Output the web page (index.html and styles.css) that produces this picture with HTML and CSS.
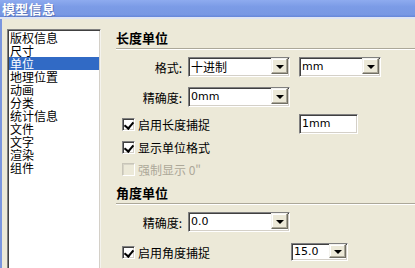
FILE: index.html
```html
<!DOCTYPE html>
<html lang="zh-CN">
<head>
<meta charset="utf-8">
<title>模型信息</title>
<link rel="stylesheet" href="styles.css">
</head>
<body>
<div class="titlebar"><span class="ttl">模型信息</span></div>
<div class="window">
  <div class="sidebar">
    <ul class="listbox">
      <li>版权信息</li>
      <li>尺寸</li>
      <li class="sel">单位</li>
      <li>地理位置</li>
      <li>动画</li>
      <li>分类</li>
      <li>统计信息</li>
      <li>文件</li>
      <li>文字</li>
      <li>渲染</li>
      <li>组件</li>
    </ul>
  </div>
  <div class="panel">
    <div class="sechead">长度单位</div>
    <div class="row r1">
      <span class="lbl">格式:</span>
      <div class="combo w102"><span class="val">十进制</span><span class="btn"><i></i></span></div>
      <div class="combo w82 gap"><span class="val lat">mm</span><span class="btn"><i></i></span></div>
    </div>
    <div class="row r2">
      <span class="lbl">精确度:</span>
      <div class="combo w102"><span class="val lat">0mm</span><span class="btn"><i></i></span></div>
    </div>
    <div class="row chk r3">
      <label class="cb wide"><span class="box on"></span>启用长度捕捉</label>
      <div class="text w59"><span class="val lat">1mm</span></div>
    </div>
    <div class="row chk r4">
      <label class="cb"><span class="box on"></span>显示单位格式</label>
    </div>
    <div class="row chk r5">
      <label class="cb dis"><span class="box"></span>强制显示 0"</label>
    </div>
    <div class="sechead s2">角度单位</div>
    <div class="row r6">
      <span class="lbl">精确度:</span>
      <div class="combo w102"><span class="val lat">0.0</span><span class="btn"><i></i></span></div>
    </div>
    <div class="row chk r7">
      <label class="cb wide2"><span class="box on"></span>启用角度捕捉</label>
      <div class="combo w57 h18"><span class="val lat">15.0</span><span class="btn"><i></i></span></div>
    </div>
  </div>
</div>
</body>
</html>
```

FILE: styles.css
```css
* { box-sizing: border-box; }
html, body {
  margin: 0;
  padding: 0;
  width: 415px;
  height: 268px;
  overflow: hidden;
  background: #ece9d8;
  font-family: "Noto Sans CJK SC", "Liberation Sans", sans-serif;
  font-size: 12px;
  color: #000;
}
.titlebar {
  height: 17px;
  padding-left: 2px;
  display: flex;
  align-items: center;
  color: #fff;
  font-weight: bold;
  font-size: 13px;
  text-shadow: 1px 1px 0 #5b74b8;
  background: linear-gradient(#8eabef, #7b9be6 40%, #7898e4 85%, #6586d9);
  border-bottom: 2px solid #dfe5f3;
  box-sizing: content-box;
}
.ttl {
  line-height: 15px;
  letter-spacing: 0.3px;
}
.window {
  display: flex;
  height: 249px;
  overflow: hidden;
  border-left: 2px solid #7a96df;
}
.sidebar {
  padding: 10px 0 0 5px;
  width: 99px;
  flex: none;
  display: flex;
  flex-direction: column;
}
.listbox {
  list-style: none;
  margin: 0;
  width: 94px;
  flex: 1;
  background: #fff;
  border-top: 1px solid #808080;
  border-left: 1px solid #808080;
  border-right: 1px solid #f4f3ee;
  box-shadow: inset 1px 1px 0 #404040, inset -1px 0 0 #d4d0c8;
  padding: 1px 0 0 1px;
}
.listbox li {
  height: 13px;
  line-height: 13px;
  padding-left: 1px;
  white-space: nowrap;
  margin-right: 1px;
}
.listbox li.sel {
  background: #316ac5;
  color: #fff;
}
.panel {
  flex: 1;
  margin-left: 15px;
  padding-top: 11px;
}
.sechead {
  height: 19px;
  line-height: 16px;
  padding-bottom: 3px;
  font-weight: bold;
  font-size: 13px;
  border-bottom: 1px solid #aca899;
  box-shadow: 0 1px 0 #fff;
}
.sechead.s2 { margin-top: 5px; }
.row {
  display: flex;
  align-items: center;
  height: 20px;
}
.r1 { margin-top: 8px; }
.r2 { margin-top: 10px; }
.r3 { margin-top: 7px; }
.r4, .r5 { height: 22px; }
.r4 { margin-top: 2px; }
.r6 { margin-top: 8px; }
.r7 { margin-top: 10px; }
.lbl {
  width: 66px;
  text-align: right;
  margin-right: 6px;
  white-space: nowrap;
}
.combo, .text {
  display: flex;
  align-items: center;
  height: 20px;
  background: #fff;
  border-top: 1px solid #808080;
  border-left: 1px solid #808080;
  border-right: 1px solid #fff;
  border-bottom: 1px solid #fff;
  box-shadow: inset 1px 1px 0 #404040, inset -1px -1px 0 #d4d0c8;
  padding-left: 2px;
}
.h18 { height: 18px; }
.w102 { width: 102px; }
.w82 { width: 82px; }
.w59 { width: 59px; }
.w57 { width: 57px; }
.gap { margin-left: 9px; }
.val {
  flex: 1;
  white-space: nowrap;
  line-height: 14px;
}
.lat {
  font-family: "DejaVu Sans", "Liberation Sans", sans-serif;
  font-size: 11px;
}
.btn {
  width: 17px;
  height: calc(100% - 2px);
  margin-right: 1px;
  background: #ece9d8;
  border-top: 1px solid #f4f3ee;
  border-left: 1px solid #f4f3ee;
  border-right: 1px solid #716f64;
  border-bottom: 1px solid #716f64;
  box-shadow: inset -1px -1px 0 #aca899, inset 1px 1px 0 #fff;
  display: flex;
  align-items: center;
  justify-content: center;
  align-self: flex-start;
}
.btn i {
  display: block;
  width: 0;
  height: 0;
  border-left: 4px solid transparent;
  border-right: 4px solid transparent;
  border-top: 4px solid #000;
  margin-top: 1px;
}
.cb {
  display: flex;
  align-items: center;
  padding-left: 6px;
  white-space: nowrap;
}
.cb.wide { width: 183px; }
.cb.wide2 { width: 175px; }
.box {
  width: 13px;
  height: 13px;
  margin-right: 3px;
  background: #fff;
  border-top: 1px solid #808080;
  border-left: 1px solid #808080;
  border-right: 1px solid #fff;
  border-bottom: 1px solid #fff;
  box-shadow: inset 1px 1px 0 #404040, inset -1px -1px 0 #d4d0c8;
  position: relative;
  flex: none;
}
.box.on::after {
  content: "";
  position: absolute;
  left: 3px;
  top: 1px;
  width: 4px;
  height: 7px;
  border-right: 2px solid #000;
  border-bottom: 2px solid #000;
  transform: rotate(40deg);
}
.cb.dis { color: #aca899; }
.cb.dis .box {
  background: #ece9d8;
  border-top-color: #c8c5b8;
  border-left-color: #c8c5b8;
  box-shadow: inset 1px 1px 0 #d6d3c6;
}
```
